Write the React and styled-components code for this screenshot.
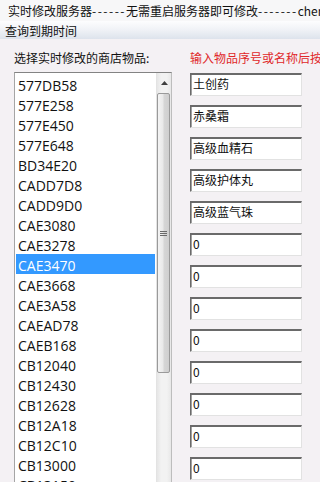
import React from "react";
import styled, { createGlobalStyle } from "styled-components";

const Global = createGlobalStyle`
  html, body { margin: 0; padding: 0; width: 320px; height: 482px; overflow: hidden; background: #f4f1f4; }
  * { box-sizing: border-box; }
`;

const CJK = `"Noto Sans CJK SC", "Noto Sans", sans-serif`;

const Window = styled.div`
  width: 320px;
  height: 482px;
  overflow: hidden;
  background: #f4f1f4;
  display: flex;
  flex-direction: column;
`;

const TitleBar = styled.div`
  height: 21px;
  flex: none;
  display: flex;
  align-items: center;
  gap: 5px;
  padding-left: 3px;
  background: #f7f7f8;
  font-family: ${CJK};
  font-size: 12px;
  color: #111;
  white-space: nowrap;
  overflow: hidden;
`;

const Dashes = styled.span`
  letter-spacing: 1.5px;
`;

const MenuBar = styled.div`
  height: 18px;
  flex: none;
  display: flex;
  align-items: center;
  padding-left: 5px;
  background: linear-gradient(#fdfdfe 0%, #f1f3f7 45%, #dde3ec 100%);
  font-family: ${CJK};
  font-size: 12px;
  color: #111;
`;

const Body = styled.div`
  flex: 1;
  display: grid;
  grid-template-columns: 158px 1fr;
  column-gap: 18px;
  padding: 9px 0 0 14px;
  overflow: hidden;
`;

const Column = styled.div`
  display: flex;
  flex-direction: column;
  min-width: 0;
  overflow: hidden;
`;

const Label = styled.div`
  height: 24px;
  flex: none;
  font-family: ${CJK};
  font-size: 12px;
  line-height: 20px;
  color: ${(p) => p.color || "#111"};
  white-space: nowrap;
`;

const ListBox = styled.div`
  display: flex;
  border-top: 1px solid #838383;
  border-left: 1px solid #a5a5a5;
  border-right: 1px solid #bdbdbd;
  background: #fff;
  height: 420px;
`;

const Items = styled.div`
  flex: 1;
  padding: 1px 1px 0 1px;
  overflow: hidden;
`;

const Item = styled.div`
  height: 20px;
  padding: 2px 0 0 2px;
  font-family: "Open Sans", "Noto Sans", sans-serif;
  font-size: 14px;
  color: ${(p) => (p.selected ? "#fff" : "#111")};
  background: ${(p) => (p.selected ? "#3399ff" : "transparent")};
`;

const ItemText = styled.div`
  height: 18px;
  line-height: 20px;
  white-space: nowrap;
`;

const ScrollBar = styled.div`
  width: 15px;
  flex: none;
  display: flex;
  flex-direction: column;
  background: linear-gradient(90deg, #e6e6e6, #f2f2f2 30%, #f2f2f2 70%, #e8e8e8);
  border-left: 1px solid #e3e3e3;
`;

const Arrow = styled.div`
  height: 20px;
  flex: none;
  display: flex;
  align-items: center;
  justify-content: center;
`;

const Thumb = styled.div`
  height: 280px;
  margin: 0 1px 0 0;
  border: 1px solid #9a9a9a;
  border-radius: 2px;
  background: linear-gradient(90deg, #f4f4f4 0%, #e9e9e9 45%, #d6d6d6 55%, #cfcfcf 100%);
  display: flex;
  align-items: center;
  justify-content: center;
`;

const Inputs = styled.div`
  display: flex;
  flex-direction: column;
  gap: 9px;
  width: 112px;
  margin-top: 1px;
`;

const TextBox = styled.div`
  height: 23px;
  flex: none;
  background: #fff;
  border-top: 2px solid #6a6a6a;
  border-left: 1px solid #6a6a6a;
  border-right: 1px solid #e2e2e2;
  border-bottom: 1px solid #e2e2e2;
  box-shadow: inset 1px 0 0 #a0a0a0;
  padding: 1px 0 0 2px;
  font-family: ${CJK};
  font-size: 12px;
  line-height: 16px;
  color: #111;
  white-space: nowrap;
  overflow: hidden;
`;

const items = [
  "577DB58", "577E258", "577E450", "577E648", "BD34E20", "CADD7D8", "CADD9D0",
  "CAE3080", "CAE3278", "CAE3470", "CAE3668", "CAE3A58", "CAEAD78", "CAEB168",
  "CB12040", "CB12430", "CB12628", "CB12A18", "CB12C10", "CB13000", "CB13150",
];

const values = ["土创药", "赤桑霜", "高级血精石", "高级护体丸", "高级蓝气珠", "0", "0", "0", "0", "0", "0", "0", "0"];

const AppIcon = () => (
  <svg width="12" height="11" viewBox="0 0 12 11">
    <rect x="0.5" y="1.5" width="11" height="9" fill="#fff" stroke="#4a6a9a" />
    <rect x="0.5" y="1.5" width="11" height="2" fill="#5b86c4" />
    <path d="M3 6 L6 6 L6 9" stroke="#3a5a8a" fill="none" />
  </svg>
);

export default function App() {
  return (
    <Window>
      <Global />
      <TitleBar>
        <AppIcon />
        <span>
          实时修改服务器<Dashes>------</Dashes>无需重启服务器即可修改<Dashes>-------</Dashes>cheng
        </span>
      </TitleBar>
      <MenuBar>查询到期时间</MenuBar>
      <Body>
        <Column>
          <Label>选择实时修改的商店物品:</Label>
          <ListBox>
            <Items>
              {items.map((it) => (
                <Item key={it} selected={it === "CAE3470"}>
                  <ItemText>{it}</ItemText>
                </Item>
              ))}
            </Items>
            <ScrollBar>
              <Arrow>
                <svg width="7" height="4" viewBox="0 0 7 4"><path d="M0 4 L3.5 0 L7 4 Z" fill="#404040" /></svg>
              </Arrow>
              <Thumb>
                <svg width="7" height="7" viewBox="0 0 7 7">
                  <path d="M0 1.5 H7 M0 3.5 H7 M0 5.5 H7" stroke="#6a6a6a" strokeWidth="1" />
                </svg>
              </Thumb>
            </ScrollBar>
          </ListBox>
        </Column>
        <Column>
          <Label color="#e0282a">输入物品序号或名称后按回车</Label>
          <Inputs>
            {values.map((v, i) => (
              <TextBox key={i}>{v}</TextBox>
            ))}
          </Inputs>
        </Column>
      </Body>
    </Window>
  );
}
